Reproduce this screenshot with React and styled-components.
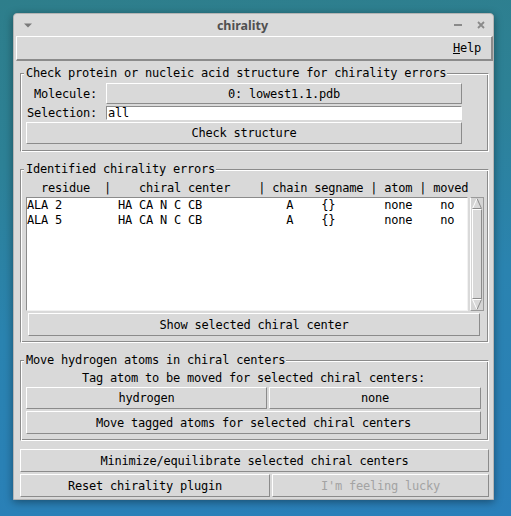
import React from 'react';
import styled, { createGlobalStyle } from 'styled-components';

const Global = createGlobalStyle`
  html, body { margin: 0; padding: 0; }
  body {
    width: 511px; height: 516px; overflow: hidden;
    background: linear-gradient(172deg, #2e7e8b 0%, #2d8196 28%, #2a83b0 58%, #2a7fba 100%);
    font-family: "DejaVu Sans Mono", "Liberation Mono", monospace;
    font-size: 12px;
    letter-spacing: -0.22px;
    color: #000;
  }
`;

const Desktop = styled.div`
  width: 511px; height: 516px; box-sizing: border-box;
  padding: 13px 0 0 13px;
`;

const Window = styled.div`
  width: 481px; height: 487px; box-sizing: border-box;
  background: #d9d9d9;
  border: 1px solid #b4b4b4;
  border-radius: 4px 4px 0 0;
  box-shadow: 0 2px 9px rgba(0, 0, 0, 0.4);
  display: flex; flex-direction: column;
`;

const TitleBar = styled.div`
  height: 22px; display: flex; align-items: center;
  background: #dadada; border-radius: 4px 4px 0 0;
`;

const WinMenu = styled.div`
  width: 26px; height: 22px; box-sizing: border-box;
  padding-left: 10px; display: flex; align-items: center;
`;

const Title = styled.div`
  flex: 1; text-align: center;
  font-family: "Noto Sans", "DejaVu Sans", sans-serif;
  font-weight: 700; font-size: 12.5px; letter-spacing: 0;
  color: #505050;
`;

const WinControls = styled.div`
  width: 48px; height: 22px; box-sizing: border-box;
  padding-left: 9px; display: flex; align-items: center; gap: 15px;
`;

const MenuBar = styled.div`
  height: 25px; box-sizing: border-box; margin-left: 2px;
  border-style: solid; border-width: 1px 2px 2px 1px;
  border-color: #fff #8b8b8b #8b8b8b #fff;
  display: flex; align-items: center; justify-content: flex-end;
  padding-right: 10px;
`;

const MenuItem = styled.span`
  line-height: 16px;
`;

const Content = styled.div`
  display: flex; flex-direction: column;
  padding: 12px 4px 0 6px;
`;

const Frame = styled.div`
  position: relative;
  display: flex; flex-direction: column;
  margin-top: ${(p) => p.$mt || 0}px;
  border: 1px solid;
  border-color: #8b8b8b #fff #fff #8b8b8b;
  box-shadow: inset 1px 1px 0 #fff, inset -1px -1px 0 #8b8b8b;
  padding: ${(p) => p.$pad};
`;

const Legend = styled.span`
  position: absolute; left: 3px; top: -8px;
  padding: 0 1px 0 2px; line-height: 14px;
  background: #d9d9d9; white-space: pre;
`;

const FormGrid = styled.div`
  display: grid;
  grid-template-columns: 80px 356px;
  row-gap: 2px;
  align-items: center;
`;

const FieldLabel = styled.div`
  text-align: right; padding-right: 9px; line-height: 14px;
`;

const Button = styled.button`
  display: block;
  box-sizing: border-box; padding: 0;
  height: ${(p) => p.$h || 23}px;
  background: #d9d9d9;
  border: 1px solid; border-color: #fff #8b8b8b #8b8b8b #fff;
  font: inherit; letter-spacing: inherit;
  color: ${(p) => (p.disabled ? '#a3a3a3' : '#000')};
  text-align: center; white-space: pre;
  grid-column: ${(p) => p.$span || 'auto'};
  margin: ${(p) => p.$m || 0};
  cursor: default;
`;

const Entry = styled.div`
  box-sizing: border-box; height: 14px;
  background: #fff;
  border: 1px solid; border-color: #8b8b8b #fff #fff #8b8b8b;
  padding-left: 1px; line-height: 12px;
`;

const Header = styled.div`
  height: 16px; line-height: 16px; margin-bottom: 1px;
  padding-left: 1px; white-space: pre;
`;

const ListArea = styled.div`
  display: flex; gap: 2px; height: 114px;
`;

const ListBox = styled.div`
  width: 442px; box-sizing: border-box;
  background: #fff;
  border: 1px solid; border-color: #8b8b8b #f2f2f2 #f2f2f2 #8b8b8b;
`;

const ListRow = styled.div`
  line-height: 15px; white-space: pre;
`;

const Scrollbar = styled.div`
  width: 14px; box-sizing: border-box;
  border: 1px solid; border-color: #9a9a9a #9a9a9a #9a9a9a #fdfdfd;
  padding: 0 1px;
  display: flex; flex-direction: column;
  background: #d4d4d4;
`;

const Slider = styled.div`
  flex: 1; box-sizing: border-box;
  background: #d9d9d9;
  border: 1px solid; border-color: #fff #8b8b8b #8b8b8b #fff;
`;

const Stack = styled.div`
  display: flex; flex-direction: column; gap: 2px;
`;

const TagLabel = styled.div`
  height: 16px; line-height: 16px; text-align: center; margin-bottom: 1px;
`;

const ButtonGrid = styled.div`
  display: grid; grid-template-columns: ${(p) => p.$cols}; column-gap: 2px;
`;

const BottomArea = styled.div`
  display: flex; flex-direction: column; gap: 2px; margin-top: 8px;
`;

function Arrow({ down }) {
  return (
    <svg width="10" height="11" viewBox="0 0 10 11" style={{ display: 'block' }}>
      {down ? (
        <>
          <polygon points="0.5,0.5 9.5,0.5 5,10.5" fill="#d9d9d9" />
          <line x1="0.5" y1="0.5" x2="9.5" y2="0.5" stroke="#fff" strokeWidth="1" />
          <line x1="0.5" y1="0.5" x2="5" y2="10.5" stroke="#fff" strokeWidth="1" />
          <line x1="9.5" y1="0.5" x2="5" y2="10.5" stroke="#8b8b8b" strokeWidth="1" />
        </>
      ) : (
        <>
          <polygon points="5,0.5 0.5,10.5 9.5,10.5" fill="#d9d9d9" />
          <line x1="5" y1="0.5" x2="0.5" y2="10.5" stroke="#fff" strokeWidth="1" />
          <line x1="5" y1="0.5" x2="9.5" y2="10.5" stroke="#8b8b8b" strokeWidth="1" />
          <line x1="0.5" y1="10.5" x2="9.5" y2="10.5" stroke="#8b8b8b" strokeWidth="1" />
        </>
      )}
    </svg>
  );
}

const rows = [
  'ALA 2        HA CA N C CB            A    {}       none    no',
  'ALA 5        HA CA N C CB            A    {}       none    no',
];

export default function App() {
  return (
    <>
      <Global />
      <Desktop>
        <Window>
          <TitleBar>
            <WinMenu>
              <svg width="8" height="5" viewBox="0 0 8 5">
                <polygon points="0,0.5 8,0.5 4,4.5" fill="#7a7a7a" />
              </svg>
            </WinMenu>
            <Title>chirality</Title>
            <WinControls>
              <svg width="8" height="8" viewBox="0 0 8 8">
                <rect x="0" y="3" width="8" height="2" fill="#8a8a8a" />
              </svg>
              <svg width="8" height="8" viewBox="0 0 8 8">
                <path d="M1 1 L7 7 M7 1 L1 7" stroke="#8a8a8a" strokeWidth="1.8" />
              </svg>
            </WinControls>
          </TitleBar>
          <MenuBar>
            <MenuItem><u>H</u>elp</MenuItem>
          </MenuBar>
          <Content>
            <Frame $pad="9px 0 7px 5px">
              <Legend>Check protein or nucleic acid structure for chirality errors</Legend>
              <FormGrid>
                <FieldLabel>Molecule:</FieldLabel>
                <Button $h={21}>0: lowest1.1.pdb</Button>
                <FieldLabel>Selection:</FieldLabel>
                <Entry>all</Entry>
                <Button $h={22} $span="1 / span 2">Check structure</Button>
              </FormGrid>
            </Frame>
            <Frame $mt={17} $pad="10px 4px 6px 5px">
              <Legend>Identified chirality errors</Legend>
              <Header>{'  residue  |    chiral center    | chain segname | atom | moved'}</Header>
              <ListArea>
                <ListBox>
                  {rows.map((r, i) => (
                    <ListRow key={i}>{r}</ListRow>
                  ))}
                </ListBox>
                <Scrollbar>
                  <Arrow />
                  <Slider />
                  <Arrow down />
                </Scrollbar>
              </ListArea>
              <Button $m="2px 4px 0 2px">Show selected chiral center</Button>
            </Frame>
            <Frame $mt={17} $pad="9px 7px 6px 5px">
              <Legend>Move hydrogen atoms in chiral centers</Legend>
              <TagLabel>Tag atom to be moved for selected chiral centers:</TagLabel>
              <Stack>
                <ButtonGrid $cols="241px 212px">
                  <Button $h={22}>hydrogen</Button>
                  <Button $h={22}>none</Button>
                </ButtonGrid>
                <Button>Move tagged atoms for selected chiral centers</Button>
              </Stack>
            </Frame>
            <BottomArea>
              <Button>Minimize/equilibrate selected chiral centers</Button>
              <ButtonGrid $cols="250px 217px">
                <Button>Reset chirality plugin</Button>
                <Button disabled>I'm feeling lucky</Button>
              </ButtonGrid>
            </BottomArea>
          </Content>
        </Window>
      </Desktop>
    </>
  );
}
